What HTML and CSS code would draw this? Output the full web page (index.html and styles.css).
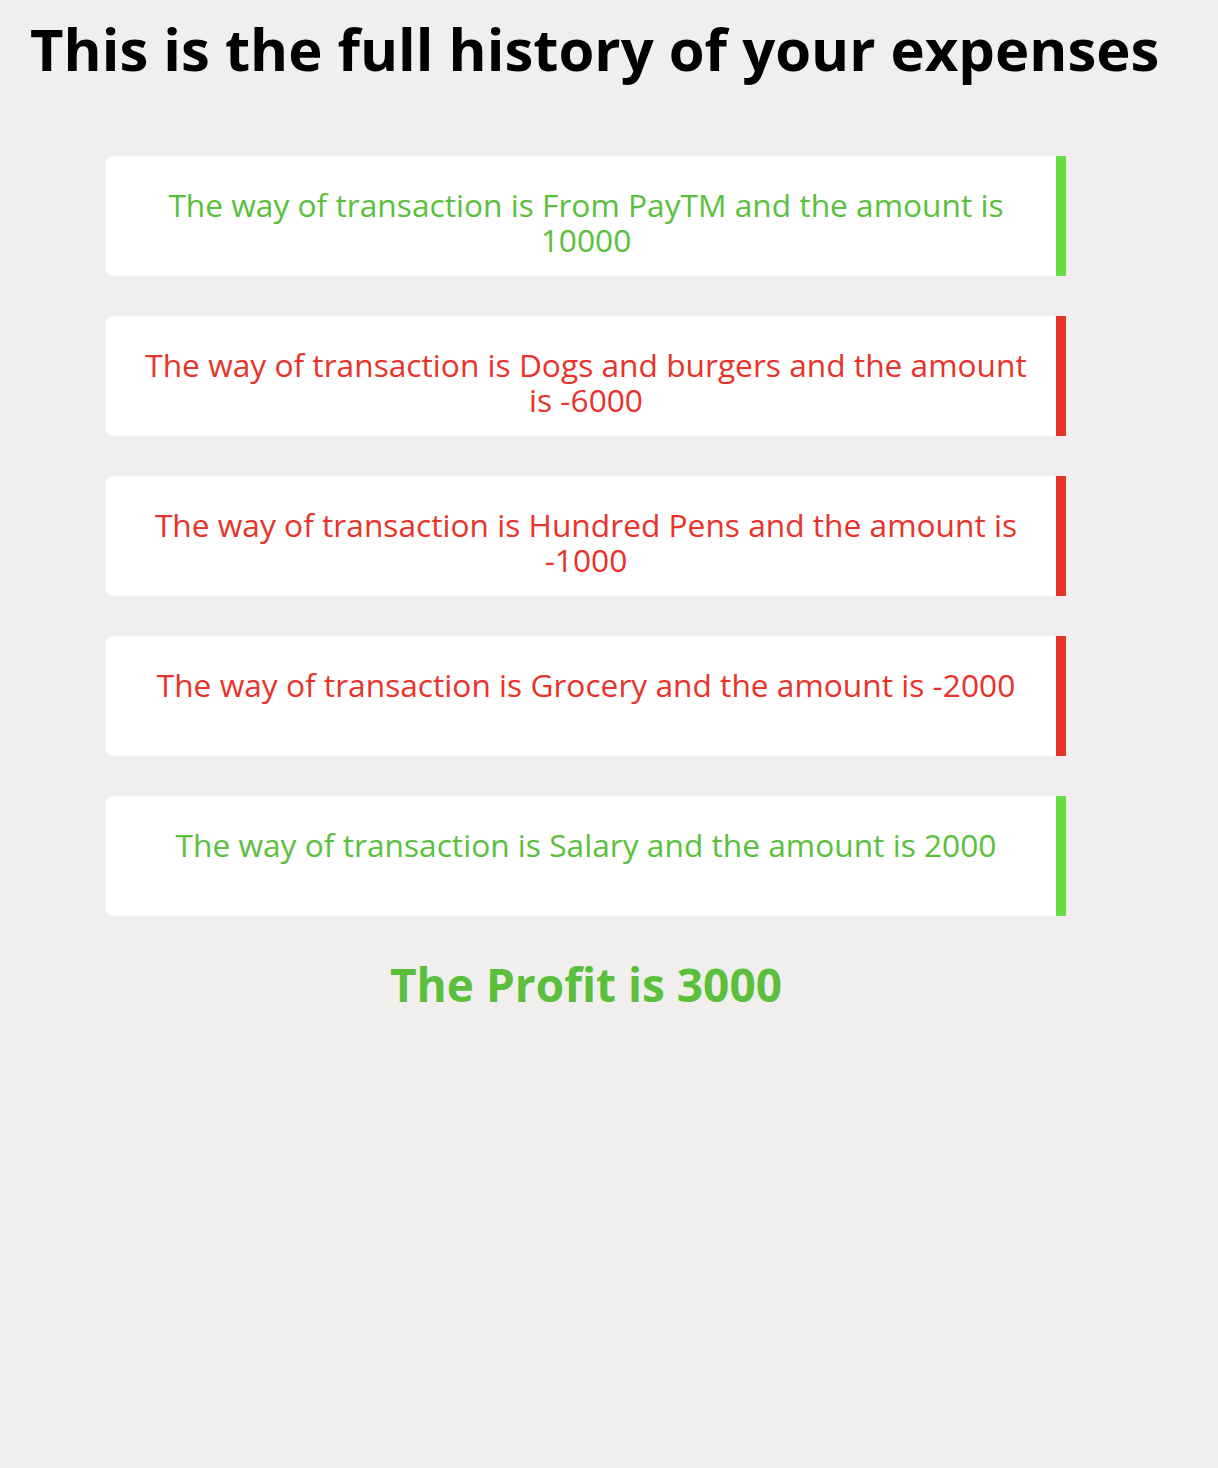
FILE: index.html
```html
<!DOCTYPE html>
<html lang="en">
<head>
<meta charset="utf-8">
<title>Expense history</title>
<link rel="stylesheet" href="styles.css">
</head>
<body>
<h1 class="title">This is the full history of your expenses</h1>
<ul class="list">
  <li class="item plus">The way of transaction is From PayTM and the amount is 10000</li>
  <li class="item minus">The way of transaction is Dogs and burgers and the amount is -6000</li>
  <li class="item minus">The way of transaction is Hundred Pens and the amount is -1000</li>
  <li class="item minus">The way of transaction is Grocery and the amount is -2000</li>
  <li class="item plus">The way of transaction is Salary and the amount is 2000</li>
</ul>
<h2 class="profit">The Profit is 3000</h2>
</body>
</html>
```
FILE: styles.css
```css
html, body {
  margin: 0;
  padding: 0;
  background: #f0efed;
}
body {
  font-family: "Open Sans", "Noto Sans", sans-serif;
  width: 1172px;
}
.title {
  margin: 15px 0 0 30px;
  font-size: 58px;
  line-height: 68px;
  font-weight: 700;
  color: #000;
  white-space: nowrap;
}
.list {
  list-style: none;
  margin: 73px 0 0 106px;
  padding: 0;
  width: 960px;
  display: flex;
  flex-direction: column;
  gap: 40px;
}
.item {
  box-sizing: border-box;
  height: 120px;
  background: #fff;
  border-radius: 8px 0 0 8px;
  padding: 31px 20px 0 30px;
  text-align: center;
  font-size: 31.7px;
  line-height: 35px;
}
.plus {
  color: #5ac03c;
  border-right: 10px solid #63dd40;
}
.minus {
  color: #e8332a;
  border-right: 10px solid #e8332a;
}
.profit {
  margin: 41px 0 0 0;
  text-align: center;
  font-size: 46px;
  line-height: 54px;
  font-weight: 700;
  color: #5ac03c;
}
```
